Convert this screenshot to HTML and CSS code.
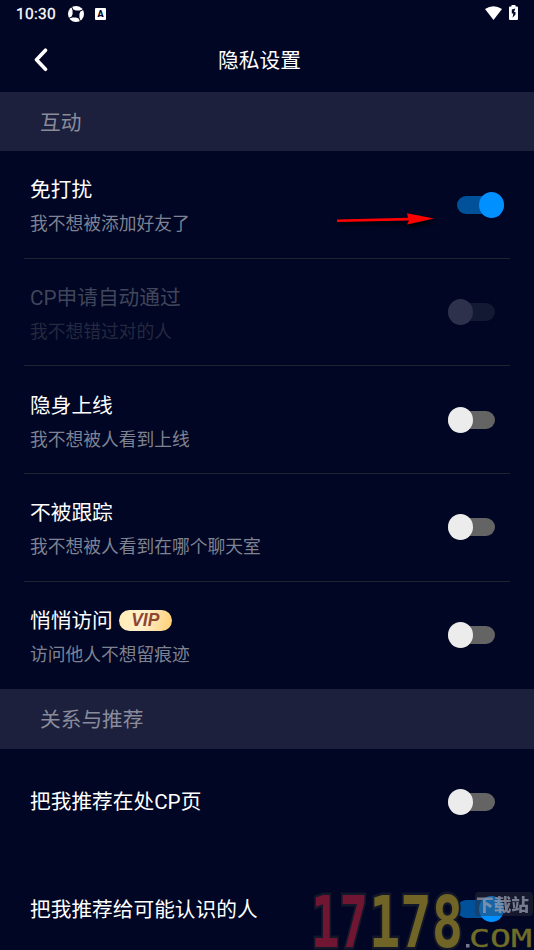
FILE: index.html
```html
<!DOCTYPE html>
<html lang="zh-CN">
<head>
<meta charset="utf-8">
<title>隐私设置</title>
<link rel="stylesheet" href="styles.css">
</head>
<body>
<div class="screen">
  <div class="status">
    <span class="clock">10:30</span>
    <svg class="swirl" width="16" height="16" viewBox="0 0 16 16">
      <circle cx="8" cy="8" r="8" fill="#fff"/>
      <path d="M4.500 3.200 8 4.600 12.800 4.500 11.400 8 11.500 12.800 8 11.400 3.200 11.500 4.600 8z" fill="#000624"/>
      <path d="M5 4 3.500 0.500M12 5 15.500 3.500M11 12 12.500 15.500M4 11 0.500 12.500" stroke="#000624" stroke-width="1"/>
    </svg>
    <span class="input-badge">A</span>
    <svg class="wifi" width="17" height="14" viewBox="0 0 17 14"><path d="M0 3Q8.500-2.300 17 3L8.500 14z" fill="#fff"/></svg>
    <svg class="battery" width="9" height="15" viewBox="0 0 9 15"><path d="M2.500 0h4v1.500H8Q9 1.500 9 2.500V14Q9 15 8 15H1Q0 15 0 14V2.500Q0 1.500 1 1.500h1.500z" fill="#fff"/><path d="M6.300 3.600 2.800 4.500V8.500h1.600L3.500 12.800 6.500 9.500V7H5z" fill="#000624"/></svg>
  </div>
  <header class="bar">
    <svg class="back" width="14" height="24" viewBox="0 0 14 24"><path d="M11.500 2.200 2.500 11.800 11.500 21.300" fill="none" stroke="#fff" stroke-width="3.600" stroke-linecap="round" stroke-linejoin="round"/></svg>
    <h1>隐私设置</h1>
  </header>

  <h2 class="section">互动</h2>
  <div class="row">
    <div class="text"><div class="name">免打扰</div><div class="desc">我不想被添加好友了</div></div>
    <span class="switch on"></span>
    <svg class="arrow" width="106" height="24" viewBox="0 0 106 24"><path d="M5 10.400 76 8.700 75 4.200 102 9.400 75 15.500 77 11.500 5 13z" fill="#f00"/></svg>
  </div>
  <div class="row disabled">
    <div class="text"><div class="name">CP申请自动通过</div><div class="desc">我不想错过对的人</div></div>
    <span class="switch"></span>
  </div>
  <div class="row">
    <div class="text"><div class="name">隐身上线</div><div class="desc">我不想被人看到上线</div></div>
    <span class="switch"></span>
  </div>
  <div class="row">
    <div class="text"><div class="name">不被跟踪</div><div class="desc">我不想被人看到在哪个聊天室</div></div>
    <span class="switch"></span>
  </div>
  <div class="row last">
    <div class="text"><div class="name">悄悄访问<span class="vip">VIP</span></div><div class="desc">访问他人不想留痕迹</div></div>
    <span class="switch"></span>
  </div>

  <h2 class="section">关系与推荐</h2>
  <div class="row last single">
    <div class="text"><div class="name">把我推荐在处CP页</div></div>
    <span class="switch"></span>
  </div>
  <div class="row last single">
    <div class="text"><div class="name">把我推荐给可能认识的人</div></div>
    <span class="switch on"></span>
  </div>

  <svg class="mark" width="224" height="64" viewBox="310 886 224 64">
    <rect x="475" y="892" width="58" height="24" rx="4" fill="#30303c" opacity=".45"/>
    <g class="digits">
      <text class="red" x="311" y="946.500" textLength="57" lengthAdjust="spacingAndGlyphs">17</text>
      <text class="gold" x="369" y="946.500" textLength="94" lengthAdjust="spacingAndGlyphs">178</text>
    </g>
    <text class="site" x="476" y="911" textLength="53" lengthAdjust="spacingAndGlyphs">下载站</text>
    <rect x="466" y="944" width="3.500" height="3.500" fill="#777a8c"/>
    <text class="com" x="469" y="946.500" textLength="63" lengthAdjust="spacingAndGlyphs">COM</text>
  </svg>
</div>
</body>
</html>
```
FILE: styles.css
```css
* { box-sizing: border-box; }
body {
  margin: 0;
  background: #000624;
  color: #fff;
  font-family: Roboto, "Noto Sans CJK SC", sans-serif;
}
.screen { position: relative; width: 534px; height: 950px; overflow: hidden; }
.status { display: flex; align-items: center; height: 28px; padding: 0 15px; }
.clock { width: 53px; font-size: 15.500px; font-weight: 400; letter-spacing: .3px; -webkit-text-stroke: .3px #fff; padding-left: 1px; }
.swirl { margin-top: -1px; }
.input-badge {
  width: 11px; height: 12px; margin-left: 11px; border-radius: 1px;
  background: #fff; color: #000624; font-size: 9px; font-weight: 900;
  line-height: 12px; text-align: center;
}
.wifi { margin-left: auto; margin-right: 7px; margin-top: -2px; }
.battery { margin-right: 1px; margin-top: -3px; }
.bar { display: grid; grid-template-columns: 60px 1fr 60px; align-items: center; height: 64px; }
.back { margin-left: 34px; margin-top: -1px; }
h1 { margin: 1px 0 0 -15px; text-align: center; font-size: 20.700px; font-weight: 400; line-height: 30px; }
.section {
  margin: 0; height: 59.300px; padding-left: 40px; background: #1c203d;
  color: #8a8c9b; font-size: 20.700px; font-weight: 400; line-height: 62px;
}
.row {
  position: relative; display: flex; align-items: center; justify-content: space-between;
  height: 107.600px; margin: 0 24px; padding: 0 15px 0 6px; border-bottom: 1px solid #1c2430;
}
.row.last { border-bottom-color: transparent; }
.text { padding-top: 4.500px; }
.single .text { padding-top: 1px; }
.name { display: flex; align-items: center; font-size: 20.700px; line-height: 32px; }
.desc { margin-top: 3px; font-size: 17.750px; line-height: 30px; color: #7f8291; }
.disabled .name { color: #414559; }
.disabled .desc { color: #24293f; }
.switch { position: relative; width: 47px; height: 18px; border-radius: 9px; background: #646464; }
.switch::before {
  content: ""; position: absolute; left: 0; top: -4px;
  width: 25px; height: 26px; border-radius: 50%; background: #ececec;
}
.switch.on { margin-right: -9px; background: #00509a; }
.switch.on::before { left: 22px; background: #0090ff; }
.disabled .switch { background: #141933; }
.disabled .switch::before { background: #2d314c; }
.arrow { position: absolute; left: 308px; top: 57.700px; filter: drop-shadow(1px 3px 2px #000); }
.vip {
  width: 53px; height: 21px; margin-left: 6px; border-radius: 11px;
  background: linear-gradient(100deg, #ffebb4, #fff0ce 45%, #ffcf72);
  color: #8d4634; font: italic bold 17.500px/21px "Liberation Sans", sans-serif;
  text-align: center;
}
.mark { position: absolute; left: 310px; top: 886px; }
.digits text { font: bold 72px "DejaVu Sans Mono", monospace; stroke: #13172a; stroke-width: 5px; paint-order: stroke; }
.digits .red { fill: #711632; }
.digits .gold { fill: #706426; }
.site { font: 900 17px "Noto Sans CJK SC", sans-serif; fill: #989caf; opacity: .75; }
.com { font: 25px "DejaVu Sans Mono", monospace; fill: #706d28; stroke: #706d28; stroke-width: .3px; }
```
